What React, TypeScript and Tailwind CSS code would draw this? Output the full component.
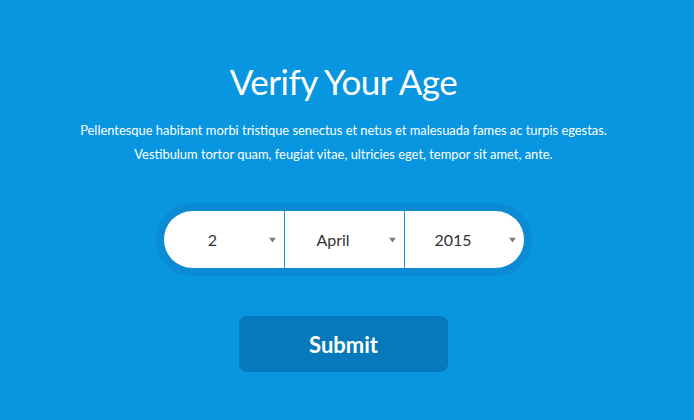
import React from "react";

function Arrow() {
  return (
    <svg width="7" height="5" viewBox="0 0 7 5" className="absolute right-[8px] top-1/2 -translate-y-1/2">
      <path d="M0 0 L7 0 L3.5 5 Z" fill="#7a7a7a" />
    </svg>
  );
}

function Seg({ value, border }: { value: string; border?: boolean }) {
  return (
    <div
      className={
        "relative flex h-full w-[120px] items-center justify-center pr-[22px] text-[16px] text-[#333]" +
        (border ? " border-l border-[#1a94dc]" : "")
      }
    >
      {value}
      <Arrow />
    </div>
  );
}

export default function App() {
  return (
    <div
      className="flex h-[420px] w-full flex-col items-center bg-[#0796df] pt-[60px] pr-[7px] text-white"
      style={{ fontFamily: "Lato, 'Noto Sans', sans-serif" }}
    >
      <h1 className="text-[35px] leading-[43px] font-normal tracking-[-0.5px]">Verify Your Age</h1>
      <p className="mt-[15px] text-center text-[12.9px] leading-[24px]">
        Pellentesque habitant morbi tristique senectus et netus et malesuada fames ac turpis egestas.
        <br />
        Vestibulum tortor quam, feugiat vitae, ultricies eget, tempor sit amet, ante.
      </p>
      <div className="mt-[37px] rounded-full bg-[#0a8bd3] p-[8px]">
        <div className="flex h-[57px] overflow-hidden rounded-full bg-white">
          <Seg value="2" />
          <Seg value="April" border />
          <Seg value="2015" border />
        </div>
      </div>
      <button className="mt-[40px] flex h-[56px] w-[209px] items-center justify-center rounded-[8px] bg-[#0679bb] text-[22px] font-bold text-white">
        Submit
      </button>
    </div>
  );
}
